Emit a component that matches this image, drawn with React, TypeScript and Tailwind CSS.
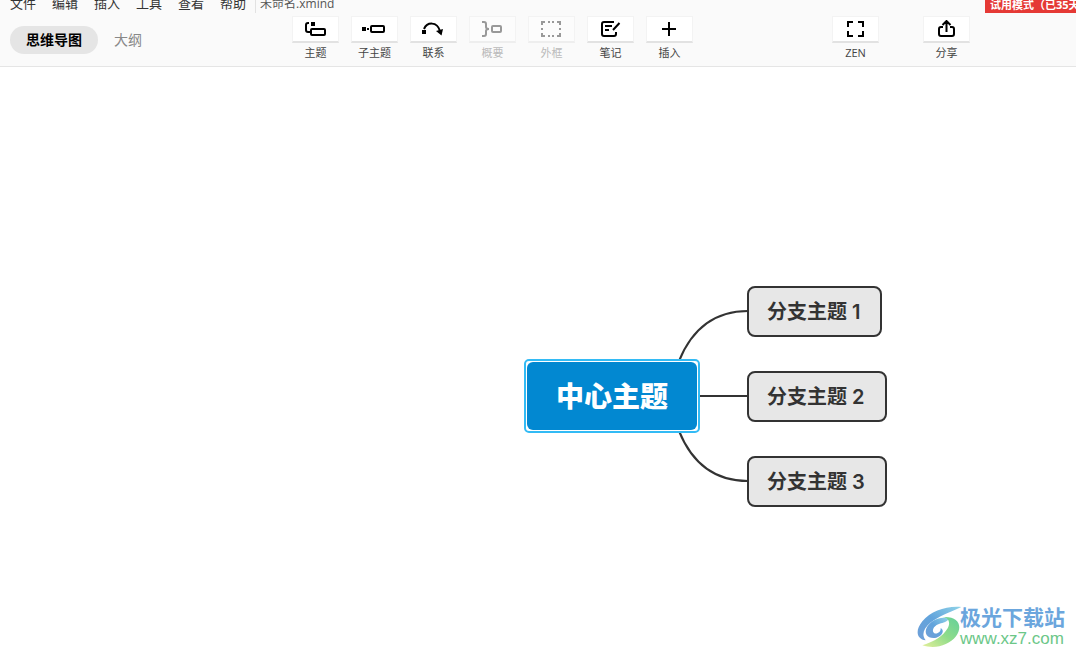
import type { ReactNode } from "react";

const MENUS = ["文件", "编辑", "插入", "工具", "查看", "帮助"];

type Tool = { label: string; icon: ReactNode; disabled?: boolean };

const TOOLS: Tool[] = [
    {
        label: "主题",
        icon: (
            <>
                <path d="M8 2h4v4H8z" fill="currentColor" stroke="none" />
                <path d="M6 3H5Q3 3 3 5v5q0 2 2 2h2" />
                <rect x="8" y="9" width="14" height="6" rx="1" />
            </>
        ),
    },
    {
        label: "子主题",
        icon: (
            <>
                <path d="M0 7h4v4H0zM5 8h2v2H5z" fill="currentColor" stroke="none" />
                <rect x="9" y="6" width="13" height="6" rx="1" />
            </>
        ),
    },
    {
        label: "联系",
        icon: (
            <>
                <path d="M1 10h4v4H1z" fill="currentColor" stroke="none" />
                <path d="M3 9C6 2 16 1 19 11" />
                <path d="M15 11l7-2-1.5 6.500z" fill="currentColor" stroke="none" />
            </>
        ),
    },
    {
        label: "概要",
        disabled: true,
        icon: (
            <>
                <path d="M2 2h2q2 0 2 2v3q0 2 3 2-3 0-3 2v3q0 2-2 2H2" />
                <rect x="12" y="6" width="9" height="6" rx="1" />
            </>
        ),
    },
    {
        label: "外框",
        disabled: true,
        icon: (
            <path d="M3 5V2h3M9 2h2M13 2h2M18 2h3v3M21 8v2M21 13v3h-3M15 16h-2M11 16H9M6 16H3v-3M3 10V8" />
        ),
    },
    {
        label: "笔记",
        icon: (
            <>
                <path d="M16 2H6Q4 2 4 4v10q0 2 2 2h10q2 0 2-2v-2" />
                <path d="M7 6h7M7 10h4M21.500 3L15 10" />
            </>
        ),
    },
    { label: "插入", icon: <path d="M12 2v14M5 9h14" /> },
];

const ACTIONS: Tool[] = [
    {
        label: "ZEN",
        icon: <path d="M5 7V2h5M15 2h5v5M20 11v5h-5M10 16H5v-5" />,
    },
    {
        label: "分享",
        icon: <path d="M9 7H7Q5 7 5 9v5q0 2 2 2h11q2 0 2-2V9q0-2-2-2h-2M12.500 12V1M8.500 5l4-4 4 4" />,
    },
];

function ToolButton({ label, icon, disabled }: Tool) {
    return (
        <button type="button" disabled={disabled} className="group flex w-[47px] flex-col items-center">
            <span className="flex h-[27px] w-full items-start justify-center border border-b-2 border-[#f3f3f3] border-b-[#e2e2e2] bg-white pt-[3px] text-black group-disabled:border-b-[#eeeeee] group-disabled:bg-[#fcfcfc] group-disabled:text-[#999999]">
                <svg
                    width="25"
                    height="19"
                    viewBox="0 0 25 19"
                    fill="none"
                    stroke="currentColor"
                    strokeWidth="2"
                    aria-hidden="true"
                >
                    {icon}
                </svg>
            </span>
            <span className="mt-[2px] whitespace-nowrap text-[11px] leading-4 text-[#444444] group-disabled:text-[#bbbbbb]">
                {label}
            </span>
        </button>
    );
}

function Header() {
    return (
        <header className="border-b border-[#e5e5e5] bg-[#fafafa]">
            <div className="flex h-[13px] items-end justify-between overflow-hidden">
                <div className="flex items-end leading-5 text-[#333333]">
                    <nav className="flex gap-4 pl-[10px] text-[13px]">
                        {MENUS.map((menu) => (
                            <button key={menu} type="button">
                                {menu}
                            </button>
                        ))}
                    </nav>
                    <span className="ml-[9px] border-l border-[#e2e2e2] pl-1 text-[12px] leading-[18px] text-[#555555]">
                        未命名.xmind
                    </span>
                </div>
                <div className="w-[91px] overflow-hidden whitespace-nowrap bg-[#e53935] pl-[5px] text-[11px] font-bold leading-4 text-white">
                    试用模式（已35天）
                </div>
            </div>
            <div className="flex h-[53px] items-start pt-[3px]">
                <div className="flex w-[292px] shrink-0 items-center gap-4 pl-[10px] pt-[10px] text-[14px] leading-7">
                    <button type="button" className="rounded-full bg-[#e5e5e5] px-4 font-bold text-black">
                        思维导图
                    </button>
                    <button type="button" className="text-[#888888]">
                        大纲
                    </button>
                </div>
                <div className="flex gap-3">
                    {TOOLS.map((tool) => (
                        <ToolButton key={tool.label} {...tool} />
                    ))}
                </div>
                <div className="ml-auto flex gap-11 pr-[106px]">
                    {ACTIONS.map((tool) => (
                        <ToolButton key={tool.label} {...tool} />
                    ))}
                </div>
            </div>
        </header>
    );
}

// Topics sit on a free canvas, so each one carries its own place
const BRANCHES = [
    { label: "分支主题 1", place: "top-[219px] w-[135px]" },
    { label: "分支主题 2", place: "top-[304px] w-[140px]" },
    { label: "分支主题 3", place: "top-[389px] w-[140px]" },
];

function MindMap() {
    return (
        <>
            <svg
                className="absolute left-[670px] top-[230px]"
                width="80"
                height="200"
                viewBox="0 0 80 200"
                fill="none"
                stroke="#333333"
                strokeWidth="2"
                aria-hidden="true"
            >
                <path d="M9 64C22 32 44 14 78 14M26 99h52M9 134c13 32 35 50 69 50" />
            </svg>
            <div className="absolute left-[524px] top-[292px] rounded-[5px] border-2 border-[#33bbf5] bg-white p-px">
                <div className="flex h-[68px] w-[170px] items-center justify-center rounded-md bg-[#0288d1] text-[28px] font-black leading-10 text-white">
                    中心主题
                </div>
            </div>
            {BRANCHES.map(({ label, place }) => (
                <div
                    key={label}
                    className={`absolute left-[747px] flex h-[51px] items-center whitespace-nowrap rounded-lg border-2 border-[#333333] bg-[#e7e7e7] pl-[18px] font-[Inter,'Noto_Sans_CJK_SC',sans-serif] text-[20px] font-semibold text-[#333333] ${place}`}
                >
                    {label}
                </div>
            ))}
        </>
    );
}

function Watermark() {
    return (
        <div className="absolute bottom-[7px] right-[11px] flex items-center">
            <svg className="-mr-[2px]" width="45" height="42" viewBox="30 45 135 126" aria-hidden="true">
                <defs>
                    <linearGradient id="blue" x1="1" y1="0" x2="0" y2="1">
                        <stop offset="0" stopColor="#8fd3e8" />
                        <stop offset="0.5" stopColor="#62a4dc" />
                        <stop offset="1" stopColor="#6f9fd8" />
                    </linearGradient>
                    <linearGradient id="green" x1="1" y1="0" x2="0" y2="1">
                        <stop offset="0" stopColor="#63cf9a" />
                        <stop offset="0.5" stopColor="#8fdc8a" />
                        <stop offset="1" stopColor="#e3ef9a" />
                    </linearGradient>
                </defs>
                <path
                    d="M163 48C118 44 72 60 46 91C24 118 28 144 56 148C43 132 49 112 72 94C94 77 122 66 163 48Z"
                    fill="url(#blue)"
                />
                <path
                    d="M126 84C104 74 74 86 60 108C48 130 66 146 88 140C106 134 114 119 101 111C102 122 92 130 82 127C73 120 79 106 94 100C104 95 116 96 126 84Z"
                    fill="url(#blue)"
                />
                <path
                    d="M106 78C128 80 130 98 122 112C108 136 84 151 46 163C84 175 125 164 147 136C168 106 156 74 106 78Z"
                    fill="url(#green)"
                />
            </svg>
            <div className="flex flex-col">
                <span className="text-[21px] font-bold leading-6 text-[#6ba6dd]">极光下载站</span>
                <a
                    href="#"
                    className="font-['Liberation_Sans',sans-serif] text-[17px] leading-5 text-[#6cc788]"
                >
                    www.xz7.com
                </a>
            </div>
        </div>
    );
}

export default function App() {
    return (
        <div className="flex min-h-screen flex-col bg-white font-['Open_Sans','Noto_Sans_CJK_SC',sans-serif]">
            <Header />
            <main className="relative flex-1 overflow-hidden">
                <MindMap />
                <Watermark />
            </main>
        </div>
    );
}
